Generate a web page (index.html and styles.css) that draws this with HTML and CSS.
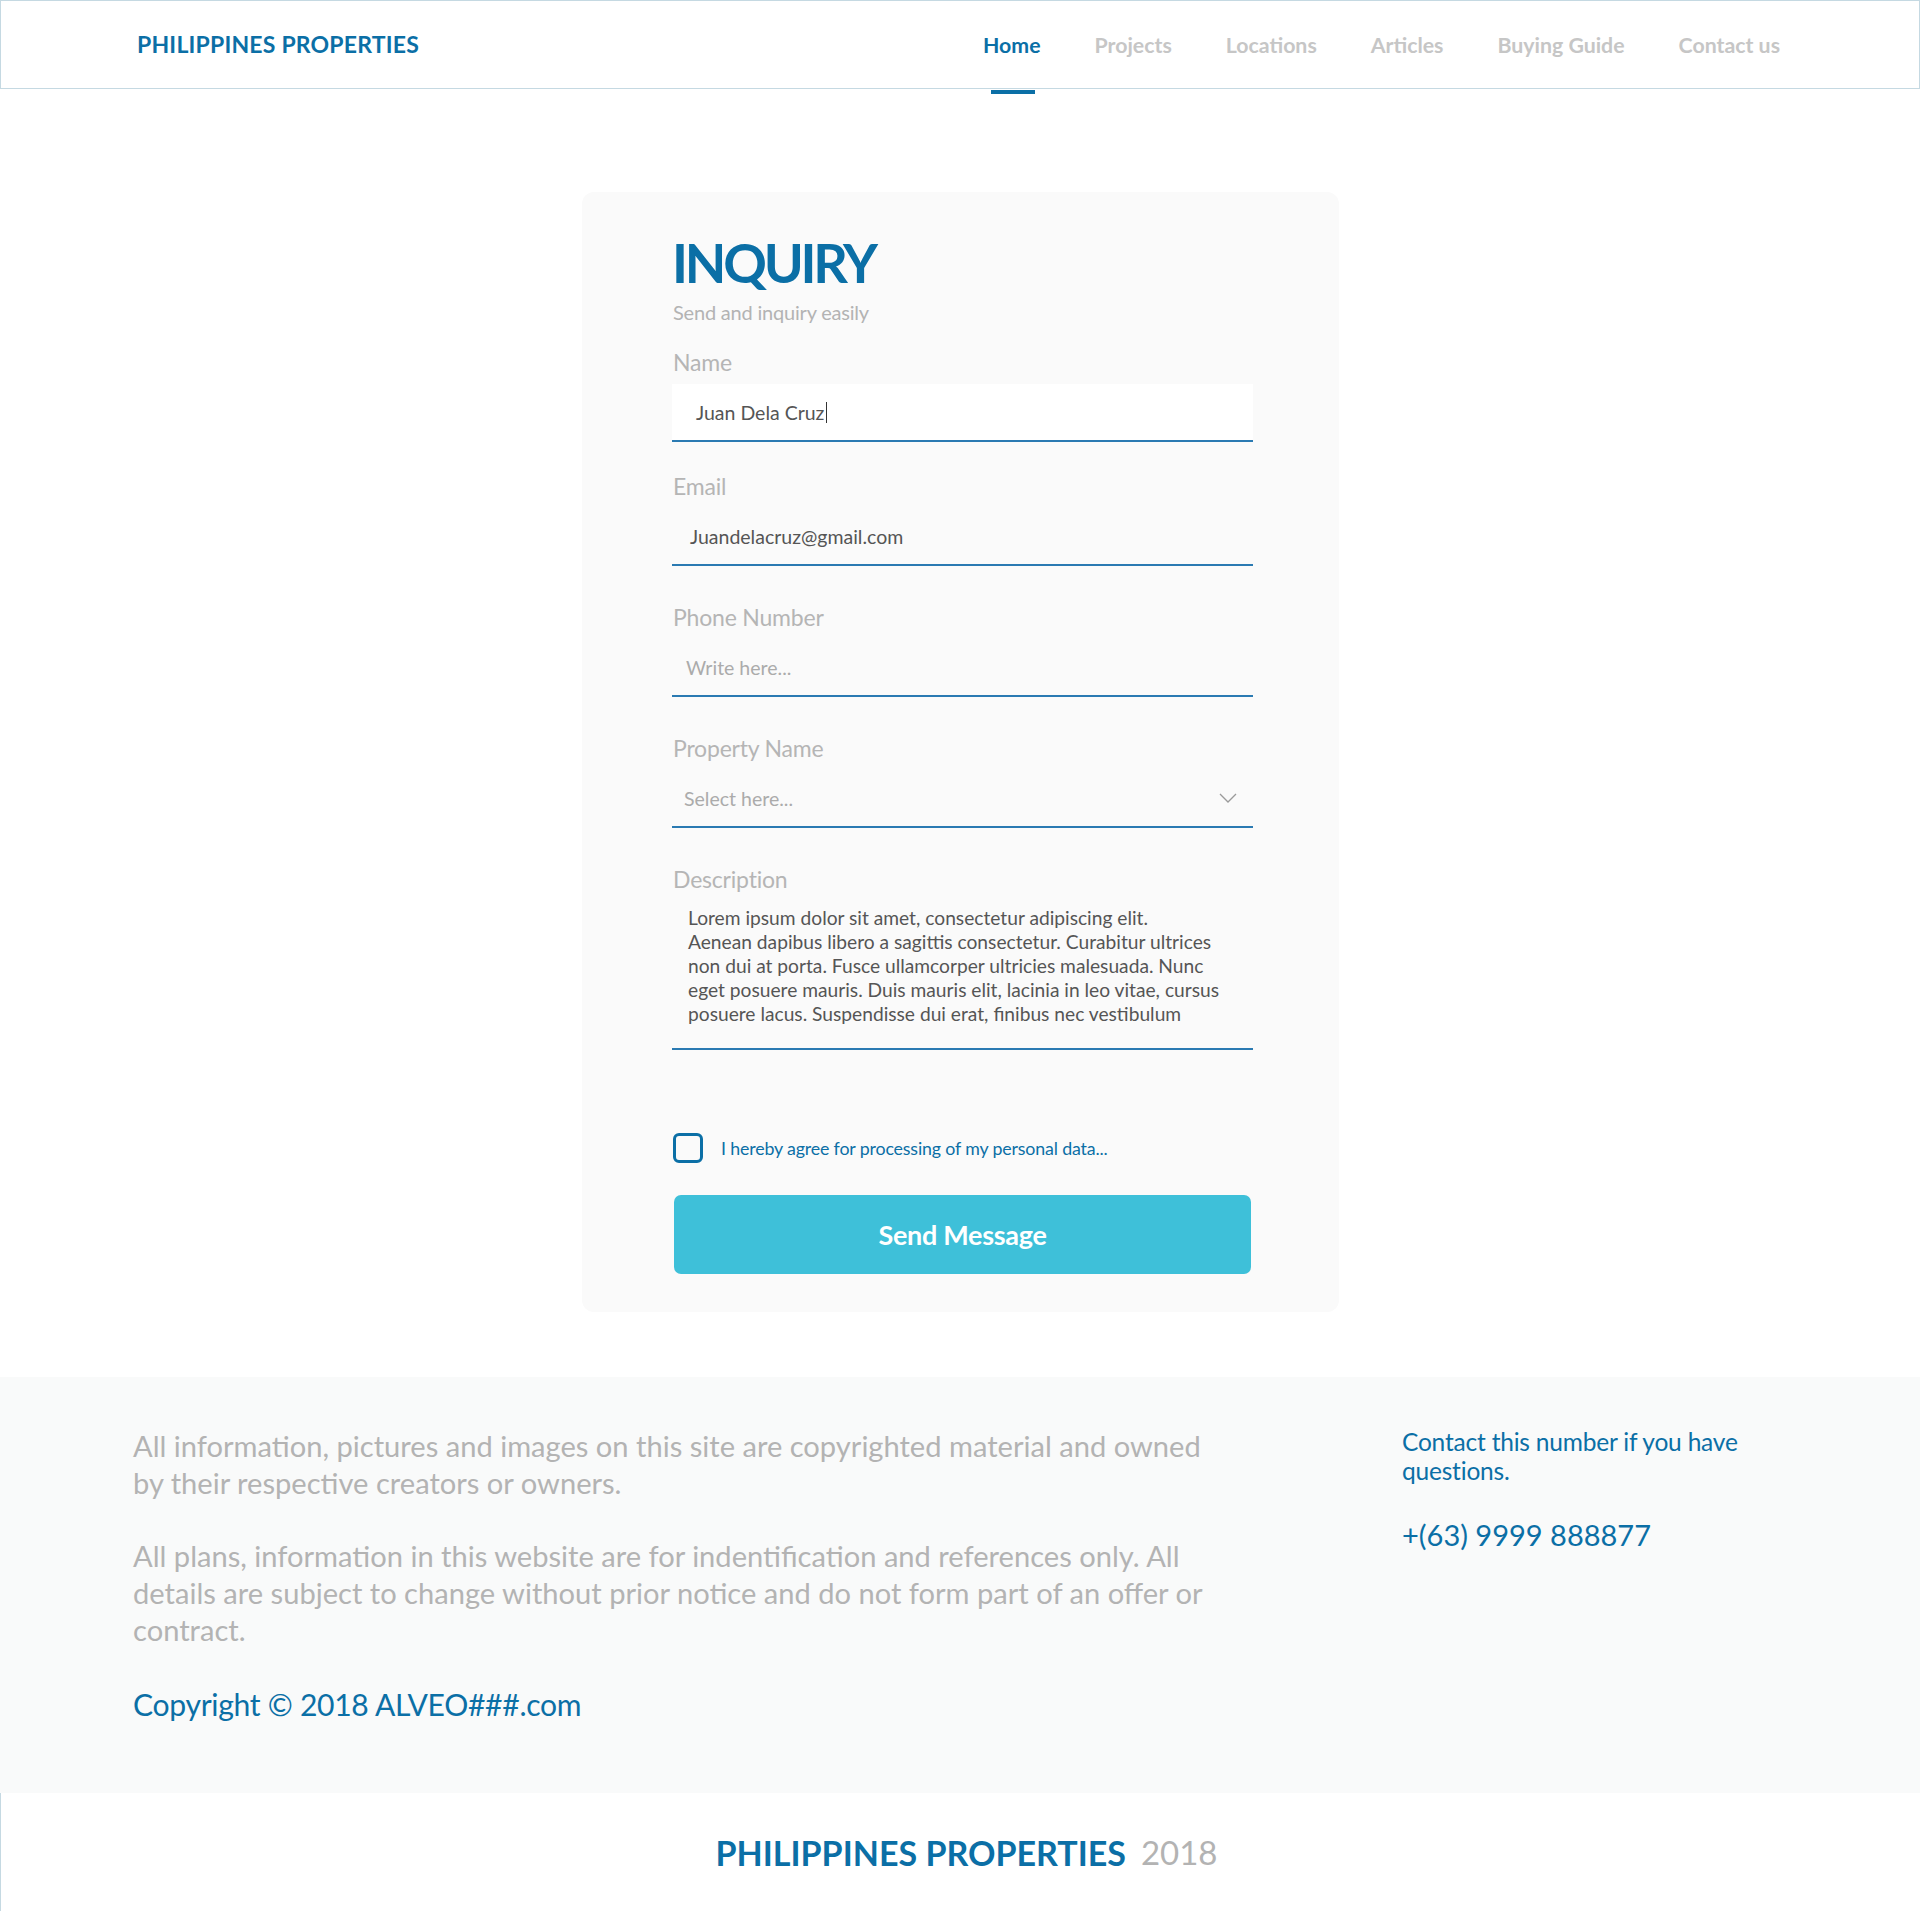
FILE: index.html
```html
<!DOCTYPE html>
<html lang="en">
<head>
<meta charset="utf-8">
<title>Philippines Properties - Inquiry</title>
<link rel="stylesheet" href="styles.css">
</head>
<body>
<header class="topbar">
  <div class="brand">PHILIPPINES PROPERTIES</div>
  <nav class="nav">
    <a class="nav-item active" href="#">Home</a>
    <a class="nav-item" href="#">Projects</a>
    <a class="nav-item" href="#">Locations</a>
    <a class="nav-item" href="#">Articles</a>
    <a class="nav-item" href="#">Buying Guide</a>
    <a class="nav-item" href="#">Contact us</a>
  </nav>
</header>

<main class="main">
  <form class="card">
    <h1 class="title">INQUIRY</h1>
    <p class="subtitle">Send and inquiry easily</p>

    <div class="field">
      <div class="label">Name</div>
      <div class="input input-white"><span class="value">Juan Dela Cruz</span><span class="caret"></span></div>
    </div>

    <div class="field field-tight">
      <div class="label">Email</div>
      <div class="input input-email"><span class="value">Juandelacruz@gmail.com</span></div>
    </div>

    <div class="field">
      <div class="label">Phone Number</div>
      <div class="input"><span class="placeholder">Write here...</span></div>
    </div>

    <div class="field">
      <div class="label">Property Name</div>
      <div class="input select"><span class="placeholder">Select here...</span>
        <svg class="chevron" width="18" height="10" viewBox="0 0 18 10"><path d="M1 1 L9 9 L17 1" fill="none" stroke="#9a9a9a" stroke-width="1.3"/></svg>
      </div>
    </div>

    <div class="field">
      <div class="label">Description</div>
      <div class="textarea">Lorem ipsum dolor sit amet, consectetur adipiscing elit.<br>Aenean dapibus libero a sagittis consectetur. Curabitur ultrices<br>non dui at porta. Fusce ullamcorper ultricies malesuada. Nunc<br>eget posuere mauris. Duis mauris elit, lacinia in leo vitae, cursus<br>posuere lacus. Suspendisse dui erat, finibus nec vestibulum</div>
    </div>

    <label class="agree"><span class="checkbox"></span><span class="agree-text">I hereby agree for processing of my personal data...</span></label>

    <button class="send" type="button">Send Message</button>
  </form>
</main>

<footer class="footer">
  <div class="footer-left">
    <p class="legal">All information, pictures and images on this site are copyrighted material and owned by their respective creators or owners.</p>
    <p class="legal">All plans, information in this website are for indentification and references only. All details are subject to change without prior notice and do not form part of an offer or contract.</p>
    <p class="copyright">Copyright © 2018 ALVEO###.com</p>
  </div>
  <div class="footer-right">
    <p class="contact-note">Contact this number if you have questions.</p>
    <p class="phone">+(63) 9999 888877</p>
  </div>
</footer>

<div class="bottombar">
  <span class="bottom-brand">PHILIPPINES PROPERTIES</span><span class="bottom-year">2018</span>
</div>
</body>
</html>
```

FILE: styles.css
```css
* { box-sizing: border-box; }

body {
  margin: 0;
  font-family: "Lato", "Liberation Sans", sans-serif;
  background: #ffffff;
  color: #555555;
}

.topbar {
  height: 89px;
  border: 1px solid #c5d9e2;
  display: flex;
  align-items: center;
  justify-content: space-between;
  padding: 0 139px 0 136px;
}

.brand {
  font-family: "Lato", sans-serif;
  font-weight: 700;
  font-size: 23px;
  color: #0b6fa6;
  letter-spacing: 0.2px;
  margin-top: -2px;
}

.nav {
  display: flex;
  gap: 54px;
  height: 100%;
  align-items: center;
}

.nav-item {
  position: relative;
  font-size: 21.3px;
  font-weight: 700;
  color: #c6c6c6;
  text-decoration: none;
  letter-spacing: 0;
}

.nav-item.active { color: #0b6fa6; }

.nav-item.active::after {
  content: "";
  position: absolute;
  left: 8px;
  right: 6px;
  bottom: -36px;
  height: 4px;
  background: #0b6fa6;
}

.main {
  padding: 103px 0 65px;
  display: flex;
  justify-content: center;
}

.card {
  width: 757px;
  margin-left: 1px;
  background: #fafafa;
  border-radius: 12px;
  padding: 43px 86px 38px 90px;
}

.title {
  margin: 0;
  font-size: 54px;
  line-height: 56px;
  font-weight: 700;
  color: #0b6fa6;
  letter-spacing: -3.2px;
}

.subtitle {
  margin: 9px 0 0 1px;
  font-size: 20px;
  line-height: 24px;
  color: #b3b3b3;
  letter-spacing: -0.2px;
}

.field { margin-top: 23px; }
.field + .field { margin-top: 36px; }
.field + .field.field-tight { margin-top: 29px; }

.label {
  font-size: 23px;
  line-height: 30px;
  color: #b5b5b5;
  letter-spacing: -0.2px;
  padding-left: 1px;
}

.input {
  margin-top: 7px;
  height: 58px;
  border-bottom: 2px solid #2a7ab2;
  display: flex;
  align-items: center;
  padding: 0 16px 0 14px;
  font-size: 19.5px;
  letter-spacing: 0;
}

.input-white { background: #ffffff; padding-left: 24px; }
.input-email { padding-left: 18px; }

.value { color: #555555; }

.caret {
  display: inline-block;
  width: 1px;
  height: 21px;
  background: #333;
  margin-left: 2px;
}

.placeholder { color: #ababab; }

.select { justify-content: space-between; padding-left: 12px; }

.textarea {
  margin-top: 12px;
  padding: 0 8px 22px 16px;
  border-bottom: 2px solid #2a7ab2;
  font-size: 19.2px;
  line-height: 24px;
  color: #555555;
  letter-spacing: 0;
}

.agree {
  display: flex;
  align-items: center;
  gap: 18px;
  margin-top: 83px;
  padding-left: 1px;
}

.checkbox {
  width: 30px;
  height: 30px;
  border: 3px solid #0b6fa6;
  border-radius: 6px;
}

.agree-text {
  font-size: 17.8px;
  color: #0b6fa6;
  letter-spacing: -0.15px;
}

.send {
  display: block;
  width: 577px;
  height: 79px;
  margin: 32px 0 0 2px;
  border: 0;
  border-radius: 7px;
  background: #3ec0d9;
  color: #ffffff;
  font-family: "Lato", sans-serif;
  font-size: 27px;
  font-weight: 700;
  letter-spacing: -0.3px;
}

.footer {
  background: #f9fafa;
  display: flex;
  padding: 50px 0 58px 133px;
  min-height: 416px;
}

.footer-left { width: 1090px; }

.legal {
  margin: 0 0 36px;
  font-size: 29.1px;
  line-height: 37px;
  color: #b3b3b3;
  letter-spacing: 0;
}

.copyright {
  margin: 38px 0 0;
  font-size: 30.1px;
  line-height: 37px;
  color: #0b6fa6;
  letter-spacing: -0.3px;
}

.footer-right { margin-left: 179px; width: 380px; }

.contact-note {
  margin: 0;
  font-size: 24.5px;
  line-height: 29px;
  color: #0b6fa6;
  letter-spacing: -0.2px;
}

.phone {
  margin: 32px 0 0;
  font-size: 29px;
  line-height: 36px;
  color: #0b6fa6;
}

.bottombar {
  height: 118px;
  border-left: 1px solid #c5d9e2;
  display: flex;
  align-items: center;
  justify-content: center;
  gap: 15px;
  padding-left: 12px;
}

.bottom-brand {
  font-size: 34px;
  font-weight: 700;
  color: #0b6fa6;
}

.bottom-year {
  font-size: 33px;
  color: #b3b3b3;
}
```
